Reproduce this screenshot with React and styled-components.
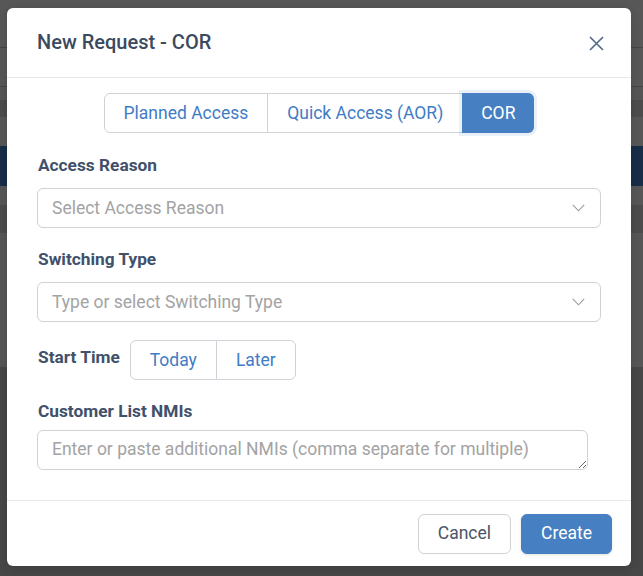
import React from "react";
import styled, { createGlobalStyle } from "styled-components";

const GlobalStyle = createGlobalStyle`
  html, body { margin: 0; padding: 0; }
  body {
    font-family: Roboto, "Noto Sans", "Liberation Sans", sans-serif;
    background: #474747;
    overflow: hidden;
  }
  * { box-sizing: border-box; }
`;

const Screen = styled.div`
  position: relative;
  width: 643px;
  height: 576px;
  overflow: hidden;
`;

const Backdrop = styled.div`
  display: flex;
  flex-direction: column;
  height: 100%;
`;

const Band = styled.div`
  height: ${(p) => p.$h}px;
  flex: ${(p) => (p.$fill ? 1 : "none")};
  background: ${(p) => p.$c};
`;

const Modal = styled.div`
  position: absolute;
  top: 8px;
  left: 7px;
  width: 624px;
  height: 558px;
  background: #ffffff;
  border-radius: 6px;
  display: flex;
  flex-direction: column;
  box-shadow: 0 2px 10px rgba(0, 0, 0, 0.15);
`;

const Header = styled.div`
  height: 70px;
  padding: 0 24px 0 30px;
  display: flex;
  align-items: center;
  justify-content: space-between;
  border-bottom: 1px solid #e5e7ea;
`;

const Title = styled.h2`
  margin: 0;
  font-size: 20px;
  font-weight: 500;
  color: #3b4a5e;
  letter-spacing: 0;
  transform: translateY(-1px);
`;

const CloseButton = styled.button`
  border: none;
  background: none;
  padding: 0;
  width: 22px;
  height: 22px;
  display: flex;
  align-items: center;
  justify-content: center;
  cursor: pointer;
  transform: translateY(1px);
`;

const Body = styled.div`
  flex: 1;
  padding: 15px 30px 0 30px;
  display: flex;
  flex-direction: column;
`;

const TabGroup = styled.div`
  align-self: center;
  display: flex;
  height: 40px;
  border: 1px solid #cfd2d6;
  border-radius: 6px;
`;

const Tab = styled.button`
  margin: ${(p) => (p.$active ? "-1px -1px -1px 0" : "0")};
  height: ${(p) => (p.$active ? "40px" : "38px")};
  padding: 0 ${(p) => p.$pad || 19}px;
  border: none;
  border-left: ${(p) => (p.$first || p.$active ? "none" : "1px solid #cfd2d6")};
  background: ${(p) => (p.$active ? "#4680c2" : "transparent")};
  color: ${(p) => (p.$active ? "#ffffff" : "#3f7cc6")};
  font-family: inherit;
  font-size: 17.5px;
  font-weight: 400;
  border-radius: ${(p) => (p.$active ? "0 6px 6px 0" : p.$first ? "6px 0 0 6px" : "0")};
  box-shadow: ${(p) => (p.$active ? "0 0 0 3px rgba(70, 128, 194, 0.12)" : "none")};
  cursor: pointer;
`;

const Label = styled.label`
  display: block;
  font-size: 17.3px;
  line-height: 20px;
  font-weight: 700;
  color: #41516b;
  padding-left: 1px;
  margin-top: ${(p) => p.$mt || 0}px;
  margin-bottom: ${(p) => p.$mb || 0}px;
`;

const SelectBox = styled.div`
  width: 564px;
  height: 40px;
  border: 1px solid #cfd2d6;
  border-radius: 6px;
  display: flex;
  align-items: center;
  padding: 0 14px;
`;

const SelectInput = styled.input`
  flex: 1;
  border: none;
  outline: none;
  background: transparent;
  font-family: inherit;
  font-size: 17.5px;
  color: #333;
  padding: 0;
  &::placeholder { color: #a3a3a3; }
`;

const Chevron = styled.svg`
  flex: none;
  margin-right: 1px;
`;

const Row = styled.div`
  display: flex;
  align-items: flex-start;
  gap: 10px;
  margin-top: 18px;
`;

const RowLabel = styled(Label)`
  margin-top: 7px;
`;

const Segmented = styled.div`
  display: flex;
  height: 40px;
  border: 1px solid #cfd2d6;
  border-radius: 6px;
`;

const Segment = styled.button`
  border: none;
  border-left: ${(p) => (p.$first ? "none" : "1px solid #cfd2d6")};
  background: transparent;
  padding: 0 ${(p) => p.$pad || 19}px;
  font-family: inherit;
  font-size: 17.5px;
  color: #3f7cc6;
  cursor: pointer;
`;

const TextArea = styled.textarea`
  width: 551px;
  height: 40px;
  border: 1px solid #cfd2d6;
  border-radius: 6px;
  padding: 7px 14px;
  font-family: inherit;
  font-size: 17.5px;
  line-height: 22px;
  resize: vertical;
  outline: none;
  display: block;
  &::placeholder { color: #a3a3a3; }
`;

const Footer = styled.div`
  height: 66px;
  border-top: 1px solid #e5e7ea;
  display: flex;
  justify-content: flex-end;
  align-items: flex-start;
  gap: 10px;
  padding: 13px 19px 0 0;
`;

const Button = styled.button`
  height: 40px;
  padding: 0 ${(p) => p.$pad || 19}px;
  border-radius: 6px;
  font-family: inherit;
  font-size: 17.5px;
  line-height: 36px;
  padding-bottom: 2px;
  cursor: pointer;
  border: 1px solid ${(p) => (p.$primary ? "#4680c2" : "#cfd2d6")};
  background: ${(p) => (p.$primary ? "#4680c2" : "#ffffff")};
  color: ${(p) => (p.$primary ? "#ffffff" : "#4a5568")};
  box-shadow: ${(p) => (p.$primary ? "0 1px 3px rgba(0,0,0,0.12)" : "none")};
`;

const ChevronIcon = () => (
  <Chevron width="13" height="8" viewBox="0 0 13 8" fill="none">
    <path d="M0.8 0.8 L6.5 6.8 L12.2 0.8" stroke="#9a9a9a" strokeWidth="1.1" />
  </Chevron>
);

const bands = [
  { h: 47, c: "#575757" },
  { h: 1, c: "#454545" },
  { h: 38, c: "#575757" },
  { h: 1, c: "#454545" },
  { h: 13, c: "#555555" },
  { h: 17, c: "#4c4c4c" },
  { h: 29, c: "#575757" },
  { h: 40, c: "#182d48" },
  { h: 19, c: "#575757" },
  { h: 28, c: "#4c4c4c" },
  { h: 134, c: "#565656" },
  { h: 0, c: "#474747", fill: true },
];

export default function App() {
  return (
    <>
      <GlobalStyle />
      <Screen>
        <Backdrop>
          {bands.map((b, i) => (
            <Band key={i} $h={b.h} $c={b.c} $fill={b.fill} />
          ))}
        </Backdrop>
        <Modal role="dialog">
          <Header>
            <Title>New Request - COR</Title>
            <CloseButton aria-label="Close">
              <svg width="15" height="15" viewBox="0 0 15 15" fill="none">
                <path d="M1 1 L14 14 M14 1 L1 14" stroke="#4f6886" strokeWidth="1.6" />
              </svg>
            </CloseButton>
          </Header>
          <Body>
            <TabGroup>
              <Tab $first>Planned Access</Tab>
              <Tab>Quick Access (AOR)</Tab>
              <Tab $active>COR</Tab>
            </TabGroup>

            <Label $mt={22} $mb={13}>Access Reason</Label>
            <SelectBox>
              <SelectInput readOnly placeholder="Select Access Reason" />
              <ChevronIcon />
            </SelectBox>

            <Label $mt={21} $mb={13}>Switching Type</Label>
            <SelectBox>
              <SelectInput placeholder="Type or select Switching Type" />
              <ChevronIcon />
            </SelectBox>

            <Row>
              <RowLabel as="span">Start Time</RowLabel>
              <Segmented>
                <Segment $first>Today</Segment>
                <Segment>Later</Segment>
              </Segmented>
            </Row>

            <Label $mt={21} $mb={9}>Customer List NMIs</Label>
            <TextArea placeholder="Enter or paste additional NMIs (comma separate for multiple)" />
          </Body>
          <Footer>
            <Button>Cancel</Button>
            <Button $primary>Create</Button>
          </Footer>
        </Modal>
      </Screen>
    </>
  );
}
